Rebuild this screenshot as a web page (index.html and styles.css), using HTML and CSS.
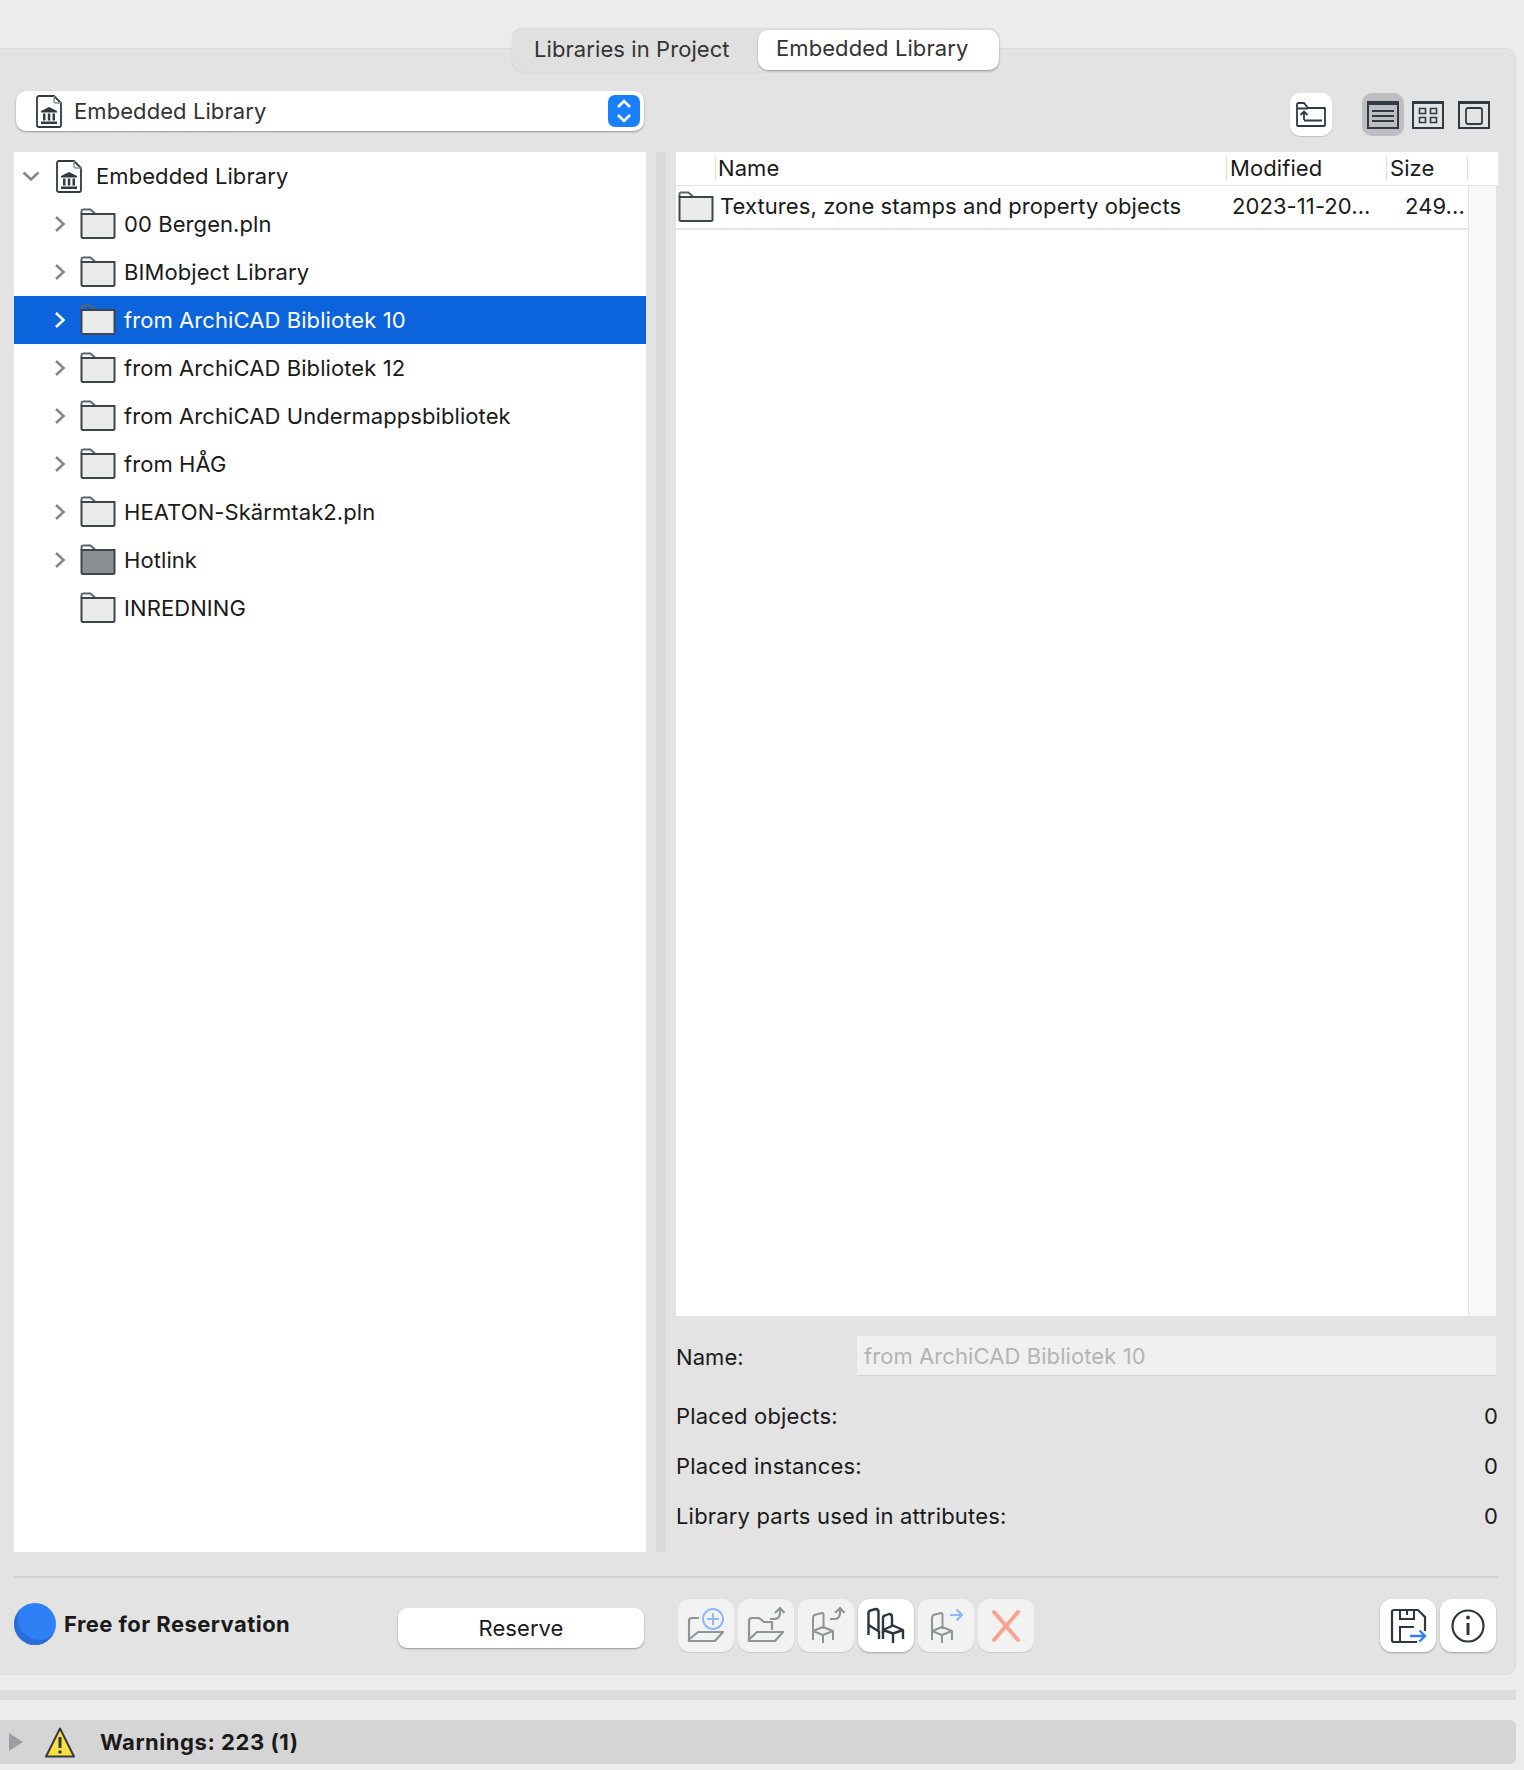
FILE: index.html
```html
<!DOCTYPE html>
<html lang="en">
<head>
    <meta charset="UTF-8">
    <title>Library Manager</title>
    <link rel="stylesheet" href="styles.css">
</head>
<body>

    <!-- shared icons -->
    <svg class="defs" width="0" height="0">
        <symbol id="folder" viewBox="0 0 36 31">
            <path d="M1.500 6V3A1.500 1.500 0 0 1 3 1.500h7.500l5 4.500" fill="none" stroke="#5b646b" stroke-width="2"/>
            <path d="M1.500 6h33v22.500a1.500 1.500 0 0 1-1.500 1.500H3a1.500 1.500 0 0 1-1.500-1.500z" fill="#ebebeb" stroke="#3c464d" stroke-width="2"/>
        </symbol>
        <symbol id="folder-dark" viewBox="0 0 36 31">
            <path d="M1.500 6V3A1.500 1.500 0 0 1 3 1.500h7.500l5 4.500" fill="none" stroke="#5b646b" stroke-width="2"/>
            <path d="M1.500 6h33v22.500a1.500 1.500 0 0 1-1.500 1.500H3a1.500 1.500 0 0 1-1.500-1.500z" fill="#8a8f92" stroke="#3c464d" stroke-width="2"/>
        </symbol>
        <symbol id="libdoc" viewBox="0 0 26 33">
            <path d="M18 1H3a2 2 0 0 0-2 2v27a2 2 0 0 0 2 2h20a2 2 0 0 0 2-2V8z" fill="#fff" stroke="#2f3a42" stroke-width="1.800"/>
            <path d="M18 1v5a2 2 0 0 0 2 2h5" fill="none" stroke="#8b9297" stroke-width="1.500"/>
            <path d="M13 12l8 4v1.500H5V16zM7 18.500h2.500v7H7zM11.800 18.500h2.500v7h-2.500zM16.500 18.500H19v7h-2.500zM5 26.500h16V29H5z" fill="#2f3a42"/>
        </symbol>
        <symbol id="chair" viewBox="0 0 56 53">
            <g fill="none" stroke="#8f9496" stroke-width="2" stroke-linejoin="round">
                <path d="M15 41V19q0-3 3-3.500l6-1.500q1.500 0 1.500 2v14"/>
                <path d="M15 32l10-4 10 4-10 4z"/>
                <path d="M35 32v9M25 36v8"/>
            </g>
        </symbol>
        <symbol id="arrow-up" viewBox="0 0 56 53">
            <path d="M32 20h4q6 0 6-6v-5M37 14l5-5 4.500 5" fill="none" stroke="#8f9496" stroke-width="2.200"/>
        </symbol>
        <symbol id="chevron" viewBox="0 0 12 16">
            <path d="M2 1l7.500 7L2 15" fill="none" stroke="currentColor" stroke-width="2.600"/>
        </symbol>
    </svg>

    <div class="tabs">
        <div class="tab">Libraries in Project</div>
        <div class="tab active">Embedded Library</div>
    </div>

    <div class="panel">
        <div class="top-bar">
            <div class="select">
                <svg class="icon-doc"><use href="#libdoc"/></svg>
                <span class="select-text">Embedded Library</span>
                <span class="stepper">
                    <svg width="32" height="32" viewBox="0 0 32 32"><path d="M10 12l6-6 6 6M10 20l6 6 6-6" fill="none" stroke="#fff" stroke-width="2.600"/></svg>
                </span>
            </div>
            <div class="tools">
                <div class="tool raised">
                    <svg width="30" height="25" viewBox="0 0 30 25">
                        <path d="M1 7V2.500A1.500 1.500 0 0 1 2.500 1H8l4 5h16.500a.5.500 0 0 1 .5.500V23a1 1 0 0 1-1 1H2a1 1 0 0 1-1-1z" fill="none" stroke="#2f3a42" stroke-width="1.800"/>
                        <path d="M1 6.500h11M8 18V9.500M4.500 13L8 9.500l3.500 3.500M8 18.500h18" fill="none" stroke="#2f3a42" stroke-width="1.800"/>
                    </svg>
                </div>
                <div class="tool pressed">
                    <svg class="view-icon" viewBox="0 0 32 28">
                        <rect x="1" y="1" width="30" height="26" fill="none" stroke="#2f3a42" stroke-width="2"/>
                        <path d="M0 0h32v4H0zM5 9h22v2H5zM5 14h22v2H5zM5 19h22v2H5z" fill="#2f3a42"/>
                    </svg>
                </div>
                <div class="tool">
                    <svg class="view-icon" viewBox="0 0 32 28">
                        <rect x="1" y="1" width="30" height="26" fill="none" stroke="#2f3a42" stroke-width="2"/>
                        <path d="M0 0h32v3H0z" fill="#2f3a42"/>
                        <path d="M7.500 7.500h6v5h-6zM18.500 7.500h6v5h-6zM7.500 16.500h6v5h-6zM18.500 16.500h6v5h-6z" fill="none" stroke="#2f3a42" stroke-width="1.600"/>
                    </svg>
                </div>
                <div class="tool">
                    <svg class="view-icon" viewBox="0 0 32 28">
                        <rect x="1" y="1" width="30" height="26" fill="none" stroke="#2f3a42" stroke-width="2"/>
                        <path d="M0 0h32v3H0z" fill="#2f3a42"/>
                        <rect x="8" y="7" width="16" height="16" rx="2" fill="none" stroke="#2f3a42" stroke-width="1.800"/>
                    </svg>
                </div>
            </div>
        </div>

        <div class="split">
            <div class="tree">
                <div class="tree-row root">
                    <svg class="chev-down" viewBox="0 0 18 10"><path d="M1.500 1.500L9 8.500l7.500-7" fill="none" stroke="#85898c" stroke-width="2.600"/></svg>
                    <svg class="icon-doc"><use href="#libdoc"/></svg>
                    <span>Embedded Library</span>
                </div>
                <div class="tree-row">
                    <svg class="chev"><use href="#chevron"/></svg>
                    <svg class="icon-folder"><use href="#folder"/></svg>
                    <span>00 Bergen.pln</span>
                </div>
                <div class="tree-row">
                    <svg class="chev"><use href="#chevron"/></svg>
                    <svg class="icon-folder"><use href="#folder"/></svg>
                    <span>BIMobject Library</span>
                </div>
                <div class="tree-row selected">
                    <svg class="chev"><use href="#chevron"/></svg>
                    <svg class="icon-folder"><use href="#folder"/></svg>
                    <span>from ArchiCAD Bibliotek 10</span>
                </div>
                <div class="tree-row">
                    <svg class="chev"><use href="#chevron"/></svg>
                    <svg class="icon-folder"><use href="#folder"/></svg>
                    <span>from ArchiCAD Bibliotek 12</span>
                </div>
                <div class="tree-row">
                    <svg class="chev"><use href="#chevron"/></svg>
                    <svg class="icon-folder"><use href="#folder"/></svg>
                    <span>from ArchiCAD Undermappsbibliotek</span>
                </div>
                <div class="tree-row">
                    <svg class="chev"><use href="#chevron"/></svg>
                    <svg class="icon-folder"><use href="#folder"/></svg>
                    <span>from HÅG</span>
                </div>
                <div class="tree-row">
                    <svg class="chev"><use href="#chevron"/></svg>
                    <svg class="icon-folder"><use href="#folder"/></svg>
                    <span>HEATON-Skärmtak2.pln</span>
                </div>
                <div class="tree-row">
                    <svg class="chev"><use href="#chevron"/></svg>
                    <svg class="icon-folder"><use href="#folder-dark"/></svg>
                    <span>Hotlink</span>
                </div>
                <div class="tree-row">
                    <span class="chev"></span>
                    <svg class="icon-folder"><use href="#folder"/></svg>
                    <span>INREDNING</span>
                </div>
            </div>

            <div class="splitter"></div>

            <div class="right">
                <div class="list-head">
                    <div class="head-cell name">Name</div>
                    <div class="head-cell modified">Modified</div>
                    <div class="head-cell size">Size</div>
                    <div class="head-cell last"></div>
                </div>
                <div class="list-body">
                    <div class="list-main">
                        <div class="list-row">
                            <svg class="icon-folder"><use href="#folder"/></svg>
                            <span class="row-name">Textures, zone stamps and property objects</span>
                            <span class="row-date">2023-11-20...</span>
                            <span class="row-size">249...</span>
                        </div>
                    </div>
                    <div class="gutter"></div>
                </div>
                <div class="details">
                    <div class="name-row">
                        <span class="name-label">Name:</span>
                        <div class="name-field">from ArchiCAD Bibliotek 10</div>
                    </div>
                    <div class="stat-row"><span>Placed objects:</span><span>0</span></div>
                    <div class="stat-row"><span>Placed instances:</span><span>0</span></div>
                    <div class="stat-row"><span>Library parts used in attributes:</span><span>0</span></div>
                </div>
            </div>
        </div>

        <div class="divider"></div>

        <div class="footer">
            <div class="status">
                <span class="dot"></span>
                <span class="status-text">Free for Reservation</span>
            </div>
            <div class="reserve">Reserve</div>
            <div class="actions">
                <div class="action">
                    <svg viewBox="0 0 56 53">
                        <path d="M11 41V22q0-3 3-3h7M20 33h25l-8 9H12q-2 0-1-1.500z" fill="none" stroke="#8f9496" stroke-width="2.200" stroke-linejoin="round"/>
                        <circle cx="35" cy="20" r="10" fill="#f2f2f2" stroke="#8fb8f8" stroke-width="2"/>
                        <path d="M35 14v12M29 20h12" stroke="#8fb8f8" stroke-width="2"/>
                    </svg>
                </div>
                <div class="action">
                    <svg viewBox="0 0 56 53">
                        <path d="M11 41V22q0-3 3-3h7l5 4h8v8M19 33h26l-8 9H12q-2 0-1-1.500z" fill="none" stroke="#8f9496" stroke-width="2.200" stroke-linejoin="round"/>
                        <use href="#arrow-up"/>
                    </svg>
                </div>
                <div class="action">
                    <svg viewBox="0 0 56 53"><use href="#chair"/><use href="#arrow-up"/></svg>
                </div>
                <div class="action on">
                    <svg viewBox="0 0 56 53">
                        <g fill="none" stroke="#2b3640" stroke-width="2.400" stroke-linejoin="round">
                            <path d="M10.500 36V14q0-2 2-2.500l5-1.500q3 0 3 3v18"/>
                            <path d="M10.500 26l10.500 6.500V40"/>
                            <path d="M25 34V19q0-2 2-2.500l4-1.500q3 0 3 3v9"/>
                            <path d="M25 31l10-4.500L45 31l-10 3.500zM45 31v9M35 34.500V44M25 31v9"/>
                        </g>
                    </svg>
                </div>
                <div class="action">
                    <svg viewBox="0 0 56 53">
                        <use href="#chair" x="-1"/>
                        <path d="M32 16h12M38.500 10.500l5.500 5.500-5.500 5.500" fill="none" stroke="#8fb8f8" stroke-width="2.200"/>
                    </svg>
                </div>
                <div class="action">
                    <svg viewBox="0 0 56 53"><path d="M16 13l24 28M40 13L16 41" stroke="#f9a392" stroke-width="4" stroke-linecap="round"/></svg>
                </div>
            </div>
            <div class="actions end">
                <div class="action on">
                    <svg viewBox="0 0 56 53">
                        <path d="M37 43H14a2 2 0 0 1-2-2V13a2 2 0 0 1 2-2h24l7 7v14" fill="none" stroke="#2b3640" stroke-width="2.200"/>
                        <path d="M20 11v9h14v-9M27 11v5M20 42V28h14" fill="none" stroke="#2b3640" stroke-width="2"/>
                        <path d="M30 37h15M39.500 31.500l5.500 5.500-5.500 5.500" fill="none" stroke="#2f80f5" stroke-width="2.400"/>
                    </svg>
                </div>
                <div class="action on">
                    <svg viewBox="0 0 56 53">
                        <circle cx="28" cy="27" r="15.500" fill="none" stroke="#2b3640" stroke-width="2.200"/>
                        <path d="M28 24v12" stroke="#2b3640" stroke-width="3"/>
                        <circle cx="28" cy="18.500" r="1.900" fill="#2b3640"/>
                    </svg>
                </div>
            </div>
        </div>
    </div>

    <div class="strip"></div>

    <div class="warnings">
        <svg class="warn-arrow" viewBox="0 0 14 18"><path d="M0 0l14 9L0 18z" fill="#9a9ea1"/></svg>
        <svg class="warn-icon" viewBox="0 0 30 31">
            <path d="M15 1.500L29 29.500H1z" fill="#ffdf40" stroke="#2f3a42" stroke-width="2" stroke-linejoin="round"/>
            <path d="M15 10v11" stroke="#2f3a42" stroke-width="3"/>
            <circle cx="15" cy="25" r="1.800" fill="#2f3a42"/>
        </svg>
        <span class="warn-text">Warnings: 223 (1)</span>
    </div>

</body>
</html>
```

FILE: styles.css
```css
body {
    font-family: Inter, "Liberation Sans", sans-serif;
    font-size: 22px;
    letter-spacing: 0.08px;
    color: #1a1a1a;
    background-color: #ececec;
    width: 1524px;
    height: 1770px;
    margin: 0;
    overflow: hidden;
}

.defs {
    display: block;
    height: 0;
}

/* Tabs sit over the top edge of the panel */
.tabs {
    display: flex;
    align-items: center;
    position: relative;
    z-index: 1;
    width: 487px;
    height: 44px;
    margin: 28px 0 -24px 512px;
    background-color: #e0e0e0;
    border-radius: 10px;
    box-shadow: 0 0 1px rgba(0, 0, 0, 0.2);
}

.tab {
    flex: 1;
    padding: 0 0 3px 22px;
    color: #333;
}

.tab.active {
    flex: none;
    width: 241px;
    height: 40px;
    line-height: 37px;
    padding: 0 0 0 18px;
    box-sizing: border-box;
    background-color: white;
    border-radius: 10px;
    box-shadow: 0 1px 2px rgba(0, 0, 0, 0.35);
}

.panel {
    width: 1516px;
    height: 1627px;
    box-sizing: border-box;
    padding: 42px 17px 0 14px;
    background-color: #e3e3e3;
    border: 1px solid #dcdcdc;
    border-left: none;
    border-radius: 0 10px 10px 0;
}

.top-bar {
    display: flex;
    justify-content: space-between;
    height: 45px;
}

.select {
    display: flex;
    align-items: center;
    width: 628px;
    height: 40px;
    margin-left: 2px;
    padding: 0 4px 0 20px;
    box-sizing: border-box;
    background-color: white;
    border-radius: 10px;
    box-shadow: 0 1px 2px rgba(0, 0, 0, 0.35);
}

.select-text {
    flex: 1;
    margin-left: 12px;
    color: #333;
}

.stepper {
    width: 32px;
    height: 32px;
    background-color: #1a7ffb;
    border-radius: 7px;
}

.icon-doc {
    width: 26px;
    height: 33px;
    flex: none;
}

.tools {
    display: flex;
    align-items: flex-end;
    height: 45px;
    padding-right: 3px;
}

.tool {
    display: flex;
    align-items: center;
    justify-content: center;
    width: 42px;
    height: 43px;
    border-radius: 10px;
}

.tool.raised {
    margin-right: 30px;
    background-color: white;
    box-shadow: 0 1px 1px rgba(0, 0, 0, 0.15);
}

.tool.pressed {
    margin-right: 3px;
    background-color: #bdbdc2;
}

.tool:last-child {
    margin-left: 4px;
}

.view-icon {
    width: 32px;
    height: 28px;
}

.split {
    display: flex;
    height: 1400px;
    margin-top: 16px;
}

.tree {
    width: 632px;
    background-color: white;
}

.tree-row {
    display: flex;
    align-items: center;
    height: 48px;
    color: #1a1a1a;
}

.tree-row.root {
    padding-left: 8px;
}

.chev-down {
    width: 18px;
    height: 10px;
    margin-right: 16px;
}

.root span {
    margin-left: 14px;
}

.chev {
    width: 12px;
    height: 16px;
    margin: 0 14px 0 40px;
    flex: none;
    color: #85898c;
}

.icon-folder {
    width: 36px;
    height: 31px;
    flex: none;
    margin: 0 8px 2px 0;
}

.tree-row.selected {
    background-color: #0b64dc;
    color: white;
}

.selected .chev {
    color: white;
}

.splitter {
    width: 10px;
    margin: 0 10px;
    background-color: #d9d9d9;
}

.right {
    width: 822px;
    display: flex;
    flex-direction: column;
}

.list-head {
    display: flex;
    align-items: center;
    height: 33px;
    padding-left: 39px;
    background-color: white;
    border-bottom: 1px solid #e4e4e4;
}

.head-cell {
    height: 24px;
    line-height: 22px;
    padding-left: 3px;
    box-sizing: border-box;
    border-left: 1px solid #ddd;
}

.head-cell.name {
    width: 511px;
    padding-left: 2px;
}

.head-cell.modified { width: 160px; }
.head-cell.size { width: 81px; }

.list-body {
    display: flex;
    width: 820px;
    height: 1130px;
    background-color: white;
}

.list-main {
    flex: 1;
}

.gutter {
    width: 27px;
    background-color: #f8f8f8;
    border-left: 1px solid #e6e6e6;
}

.list-row {
    display: flex;
    align-items: center;
    height: 42px;
    padding-left: 2px;
    border-bottom: 2px solid #e4e4e4;
}

.list-row span {
    margin-bottom: 2px;
}

.list-row .icon-folder {
    margin-right: 6px;
}

.row-name { width: 512px; }
.row-date { width: 173px; }

.details {
    width: 822px;
    margin-top: 20px;
}

.name-row {
    display: flex;
    align-items: center;
    height: 40px;
    margin-bottom: 15px;
}

.name-label {
    width: 181px;
    padding-top: 1px;
}

.name-field {
    width: 639px;
    height: 40px;
    line-height: 40px;
    padding-left: 7px;
    box-sizing: border-box;
    background-color: #f0f0f0;
    border-bottom: 1px solid #d2d2d2;
    color: #b4b4b4;
}

.stat-row {
    display: flex;
    justify-content: space-between;
    align-items: center;
    height: 50px;
    letter-spacing: 0.18px;
}

.divider {
    height: 2px;
    margin-top: 24px;
    background-color: #d2d2d2;
}

.footer {
    display: flex;
    margin-top: 21px;
    height: 53px;
}

.status {
    display: flex;
    align-items: center;
    width: 384px;
    height: 50px;
}

.dot {
    width: 42px;
    height: 42px;
    border-radius: 50%;
    background-color: #2f7ff5;
    box-shadow: inset 4px -5px 0 #2a6dd8;
}

.status-text {
    margin-left: 8px;
    font-weight: 700;
    letter-spacing: 0.45px;
}

.reserve {
    width: 246px;
    height: 40px;
    line-height: 40px;
    margin: 9px 34px 0 0;
    text-align: center;
    background-color: white;
    border-radius: 9px;
    box-shadow: 0 1px 2px rgba(0, 0, 0, 0.35);
}

.actions {
    display: flex;
    gap: 4px;
}

.actions.end {
    margin-left: auto;
    margin-right: 2px;
}

.action {
    width: 56px;
    height: 53px;
    background-color: #f2f2f2;
    border-radius: 12px;
    box-shadow: 0 1px 1px rgba(0, 0, 0, 0.12);
}

.action.on {
    background-color: white;
    box-shadow: 0 1px 2px rgba(0, 0, 0, 0.3);
}

.action svg {
    display: block;
    width: 56px;
    height: 53px;
}

.strip {
    width: 1516px;
    height: 10px;
    margin-top: 15px;
    background-color: #dcdcdc;
}

.warnings {
    display: flex;
    align-items: center;
    width: 1516px;
    height: 44px;
    margin-top: 20px;
    background-color: #d5d5d5;
    border-radius: 0 6px 6px 0;
}

.warn-arrow {
    width: 14px;
    height: 18px;
    margin-left: 9px;
}

.warn-icon {
    width: 30px;
    height: 31px;
    margin-left: 22px;
}

.warn-text {
    margin-left: 25px;
    font-weight: 700;
    letter-spacing: 0.55px;
}
```
